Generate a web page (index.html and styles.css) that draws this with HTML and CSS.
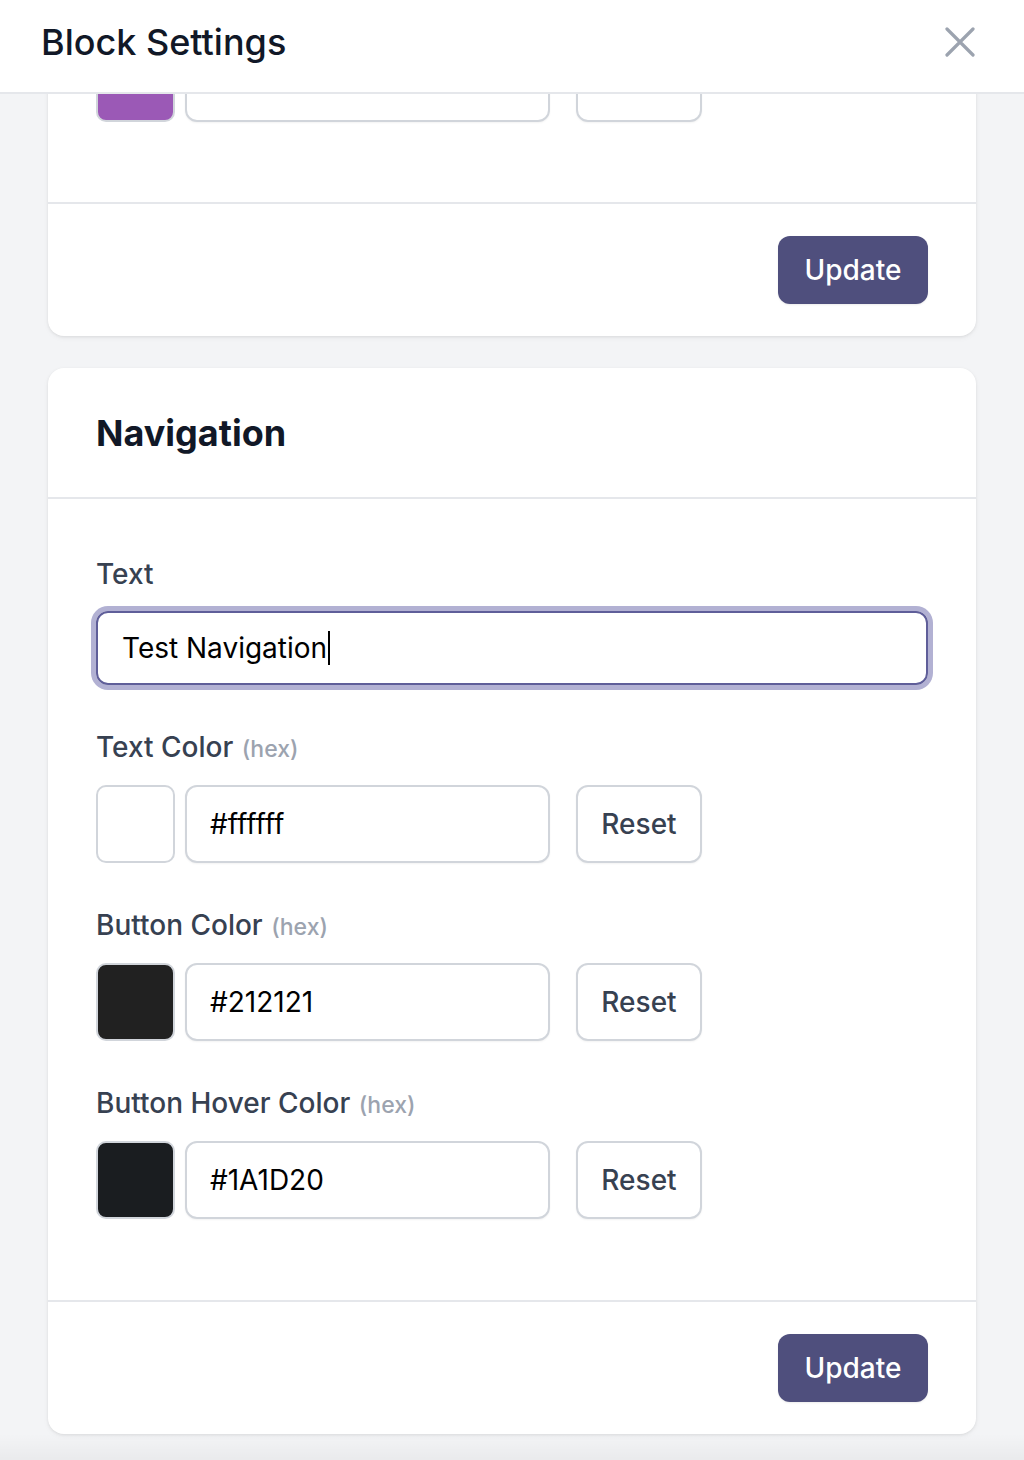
FILE: index.html
```html
<!DOCTYPE html>
<html lang="en">
<head>
<meta charset="utf-8">
<title>Block Settings</title>
<link rel="stylesheet" href="styles.css">
</head>
<body>
<header class="topbar">
  <h1 class="topbar-title">Block Settings</h1>
  <button class="close-btn" aria-label="Close">
    <svg width="30" height="30" viewBox="0 0 30 30" fill="none" stroke="currentColor" stroke-width="3.2" stroke-linecap="round"><path d="M2 2L28 28M28 2L2 28"/></svg>
  </button>
</header>
<main class="content">
  <section class="card card-scrolled">
    <div class="card-body">
      <div class="color-row">
        <span class="swatch swatch-purple"></span>
        <span class="text-field"></span>
        <span class="btn-secondary btn-blank"></span>
      </div>
    </div>
    <div class="card-footer">
      <button class="btn-primary">Update</button>
    </div>
  </section>

  <section class="card">
    <div class="card-head">
      <h2 class="card-title">Navigation</h2>
    </div>
    <div class="card-body">
      <div class="field">
        <label class="field-label">Text</label>
        <div class="text-input focused"><span>Test Navigation</span><span class="caret"></span></div>
      </div>
      <div class="field">
        <label class="field-label">Text Color <span class="hint">(hex)</span></label>
        <div class="color-row">
          <span class="swatch swatch-white"></span>
          <span class="text-field">#ffffff</span>
          <button class="btn-secondary">Reset</button>
        </div>
      </div>
      <div class="field">
        <label class="field-label">Button Color <span class="hint">(hex)</span></label>
        <div class="color-row">
          <span class="swatch swatch-dark1"></span>
          <span class="text-field">#212121</span>
          <button class="btn-secondary">Reset</button>
        </div>
      </div>
      <div class="field">
        <label class="field-label">Button Hover Color <span class="hint">(hex)</span></label>
        <div class="color-row">
          <span class="swatch swatch-dark2"></span>
          <span class="text-field">#1A1D20</span>
          <button class="btn-secondary">Reset</button>
        </div>
      </div>
    </div>
    <div class="card-footer">
      <button class="btn-primary">Update</button>
    </div>
  </section>
</main>
<div class="bottom-fade"></div>
</body>
</html>
```

FILE: styles.css
```css
* { box-sizing: border-box; }

html, body {
  margin: 0;
  padding: 0;
}

body {
  background: #f3f4f6;
  font-family: Inter, "Noto Sans", "Liberation Sans", sans-serif;
  color: #111827;
  height: 1460px;
  overflow: hidden;
  position: relative;
}

.topbar {
  position: relative;
  z-index: 2;
  height: 94px;
  background: #ffffff;
  border-bottom: 2px solid #e5e7eb;
  display: flex;
  align-items: center;
  justify-content: space-between;
  padding: 0 49px 8px 41px;
}

.topbar-title {
  margin: 0;
  font-size: 36px;
  font-weight: 500;
  line-height: 48px;
  color: #111827;
}

.close-btn {
  border: 0;
  background: none;
  padding: 0;
  color: #9ca3af;
  display: flex;
  width: 30px;
  height: 30px;
}

.content {
  margin-top: -105px;
  padding: 0 48px 32px;
  display: flex;
  flex-direction: column;
  gap: 32px;
}

.card {
  background: #ffffff;
  border-radius: 16px;
  box-shadow: 0 1px 3px rgba(0, 0, 0, 0.08), 0 2px 6px rgba(0, 0, 0, 0.04);
  overflow: hidden;
}

.card-head {
  padding: 37px 48px 36px 48px;
  border-bottom: 2px solid #e5e7eb;
}

.card-title {
  margin: 0;
  font-size: 36px;
  font-weight: 700;
  line-height: 56px;
  color: #111827;
}

.card-body {
  padding: 55px 48px 81px 48px;
  display: flex;
  flex-direction: column;
  gap: 42px;
}

.card-scrolled .card-body {
  padding-bottom: 80px;
}

.card-footer {
  border-top: 2px solid #e5e7eb;
  padding: 32px 48px;
  display: flex;
  justify-content: flex-end;
}

.field {
  display: flex;
  flex-direction: column;
}

.field-label {
  display: block;
  font-size: 28px;
  font-weight: 500;
  line-height: 40px;
  height: 40px;
  color: #374151;
  margin-bottom: 17px;
}

.field .color-row { margin-top: 1px; }

.hint {
  font-size: 23px;
  font-weight: 500;
  line-height: 1;
  color: #9ca3af;
  margin-left: 1px;
}

.text-input {
  height: 74px;
  border: 2px solid #5f5e99;
  border-radius: 12px;
  box-shadow: 0 0 0 5px #b2b1d3;
  padding: 0 24px;
  display: flex;
  align-items: center;
  font-size: 28px;
  color: #000000;
}

.caret {
  display: inline-block;
  width: 2px;
  height: 34px;
  background: #000;
  margin-left: 1px;
}

.color-row {
  display: flex;
  align-items: stretch;
  height: 78px;
  flex: none;
}

.swatch {
  width: 79px;
  border: 2px solid #d1d5db;
  border-radius: 10px;
  flex: none;
}

.swatch-purple { background: #9b59b6; }
.swatch-white { background: #ffffff; }
.swatch-dark1 { background: #212121; }
.swatch-dark2 { background: #1a1d20; }

.text-field {
  width: 365px;
  margin-left: 10px;
  border: 2px solid #d1d5db;
  border-radius: 12px;
  background: #ffffff;
  padding: 0 23px;
  display: flex;
  align-items: center;
  font-size: 28px;
  color: #000000;
  box-shadow: 0 1px 2px rgba(0, 0, 0, 0.05);
}

.btn-secondary {
  width: 126px;
  margin-left: 26px;
  border: 2px solid #d1d5db;
  border-radius: 12px;
  background: #ffffff;
  font-family: inherit;
  font-size: 28px;
  font-weight: 500;
  color: #374151;
  padding: 0;
  box-shadow: 0 1px 2px rgba(0, 0, 0, 0.05);
}

.btn-blank { display: block; }

.btn-primary {
  width: 150px;
  height: 68px;
  border: 0;
  border-radius: 12px;
  background: #4f4f7d;
  color: #ffffff;
  font-family: inherit;
  font-size: 28px;
  font-weight: 500;
  padding: 0;
  box-shadow: 0 1px 2px rgba(0, 0, 0, 0.08);
}

.bottom-fade {
  position: absolute;
  left: 0;
  right: 0;
  bottom: 0;
  height: 26px;
  background: linear-gradient(to bottom, rgba(0, 0, 0, 0), rgba(0, 0, 0, 0.04));
  pointer-events: none;
}
```
